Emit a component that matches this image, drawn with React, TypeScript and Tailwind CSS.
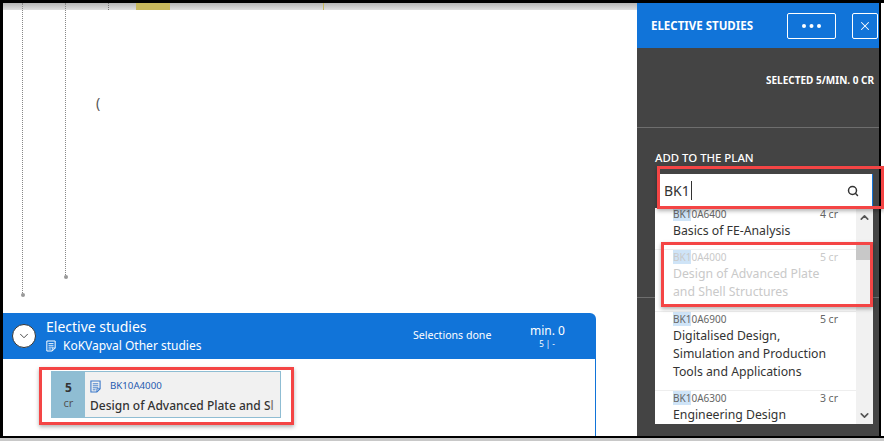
import { ChevronDown, ChevronUp, Search, X } from 'lucide-react';

const font = { fontFamily: '"Noto Sans", sans-serif' };

interface Option {
    code: string;
    credits: string;
    lines: string[];
    disabled?: boolean;
    height: string;
}

const options: Option[] = [
    { code: '0A6400', credits: '4 cr', lines: ['Basics of FE-Analysis'], height: 'h-[43px]' },
    { code: '0A4000', credits: '5 cr', lines: ['Design of Advanced Plate', 'and Shell Structures'], disabled: true, height: 'h-[62px]' },
    { code: '0A6900', credits: '5 cr', lines: ['Digitalised Design,', 'Simulation and Production', 'Tools and Applications'], height: 'h-[79px]' },
    { code: '0A6300', credits: '3 cr', lines: ['Engineering Design'], height: 'h-[40px]' },
];

// study module icon: sheet with text lines and a folded lower corner
function DocIcon({ className }: { className?: string }) {
    return (
        <svg viewBox="0 0 12 14" className={className} fill="none" stroke="currentColor">
            <path d="M1 1h10v8.5L7.5 13H1z" strokeWidth="1.2" />
            <path d="M3 4h6M3 6.2h6M3 8.4h6M3 10.6h3" strokeWidth="1" />
            <path d="M7.5 13V9.5H11" strokeWidth="1" />
        </svg>
    );
}

function OptionRow({ option }: { option: Option }) {
    return (
        <div className={`${option.height} shrink-0 overflow-hidden border-b border-[#eeeeee] px-[18px] ${option.disabled ? 'text-[#c9c9c9]' : 'text-[#333333]'}`}>
            <div className={`flex items-center justify-between text-[10px] leading-[14px] ${option.disabled ? 'text-[#c9c9c9]' : 'text-[#666666]'}`}>
                <span><span className="bg-[#cfe4f7]">BK1</span>{option.code}</span>
                <span className="text-[10.5px]">{option.credits}</span>
            </div>
            <div className="mt-[1px] text-[12.25px] leading-[18px]">
                {option.lines.map((line) => <div key={line} className="whitespace-nowrap">{line}</div>)}
            </div>
        </div>
    );
}

function Panel() {
    return (
        <div className="relative flex w-[242px] shrink-0 flex-col bg-[#444444] text-white">
            <div className="flex h-[45px] shrink-0 items-center bg-[#1174d9] pl-[14px]">
                <span className="w-[136px] whitespace-nowrap text-[11.5px] font-bold">ELECTIVE STUDIES</span>
                <button className="flex h-[26px] w-[49px] items-center justify-center rounded-[2px] border border-white">
                    <svg viewBox="0 0 19 4" className="h-[4px] w-[19px]" fill="currentColor">
                        <circle cx="2" cy="2" r="2" />
                        <circle cx="9.5" cy="2" r="2" />
                        <circle cx="17" cy="2" r="2" />
                    </svg>
                </button>
                <button className="ml-[16px] flex h-[26px] w-[26px] shrink-0 items-center justify-center rounded-[2px] border border-white">
                    <X size={14} strokeWidth={1.75} />
                </button>
            </div>
            <div className="flex h-[80px] shrink-0 items-center justify-end border-b border-[#6e6e6e] pb-[14px] pr-[5px]">
                <span className="text-[10px] font-bold">SELECTED 5/MIN. 0 CR</span>
            </div>
            <div className="ml-[18px] mt-[22px] text-[11.4px] font-medium leading-[15px]">ADD TO THE PLAN</div>
            <div className="ml-[22px] mr-[6px] mt-[9px] flex h-[33px] items-center justify-between border-r border-[#1174d9] bg-white pl-[5px] pr-[13px] text-[#333333]">
                <span className="text-[14px]">BK1<span className="ml-[1px] border-l border-[#333333]" /></span>
                <Search size={12} strokeWidth={3} />
            </div>
            <div className="mt-[90px] h-px bg-[#6e6e6e]" />

            <div className="absolute left-[18px] top-[205px] flex h-[216px] w-[218px] overflow-hidden bg-white">
                <div className="-mt-px flex w-[201px] flex-col">
                    {options.map((option) => <OptionRow key={option.code} option={option} />)}
                </div>
                <div className="relative w-[17px] bg-[#f1f1f1] text-[#555555]">
                    <ChevronUp size={13} strokeWidth={3} className="mx-auto mt-[3px]" />
                    <div className="mt-[21px] h-[15px] bg-[#c8c8c8]" />
                    <ChevronDown size={13} strokeWidth={3} className="absolute bottom-[2px] left-[2px]" />
                </div>
            </div>

            <div className="absolute left-[20px] top-[163px] h-[43px] w-[227px] border-[3px] border-[#f44545] shadow-[0_2px_4px_rgba(0,0,0,0.3)]" />
            <div className="absolute left-[24px] top-[239px] h-[65px] w-[212px] border-[3px] border-[#f44545] shadow-[0_2px_4px_rgba(0,0,0,0.3)]" />
        </div>
    );
}

function CourseCard() {
    return (
        <div className="relative ml-[48px] mt-[12px] flex h-[47px] w-[230px] border border-[#8fbdd3] bg-[#f1f1f1]">
            <div className="flex w-[33px] shrink-0 flex-col items-center justify-center bg-[#8fbdd3] text-[#333333]">
                <span className="text-[12px] font-bold leading-[15px]">5</span>
                <span className="text-[11px] leading-[15px] text-[#555555]">cr</span>
            </div>
            <div className="relative min-w-0 flex-1 pl-[5px]">
                <div className="mt-[6px] flex h-[16px] items-center gap-[9px] text-[#1f5bb0]">
                    <DocIcon className="h-[13px] w-[11px] text-[#3b78c9]" />
                    <span className="text-[9.7px]">BK10A4000</span>
                </div>
                <div className="mt-[3px] overflow-hidden whitespace-nowrap text-[12px] font-medium text-[#333333]">Design of Advanced Plate and Sl</div>
                <div className="absolute bottom-0 right-0 h-[22px] w-[12px] bg-gradient-to-r from-transparent to-[#f1f1f1]" />
            </div>
            <div className="absolute -bottom-[8px] -left-[13px] -right-[14px] -top-[5px] border-[3px] border-[#f44545] shadow-[0_2px_4px_rgba(0,0,0,0.3)]" />
        </div>
    );
}

function Main() {
    return (
        <div className="relative flex min-w-0 flex-1 flex-col bg-white">
            <div className="relative flex h-[7px] shrink-0 bg-gradient-to-b from-[#b5b5b5] to-[#e0e0e0]">
                <div className="ml-[133px] w-[34px] bg-[#c8b85c]" />
                <div className="ml-[153px] w-px bg-[#c8b85c]" />
            </div>

            <div className="absolute left-[19px] top-0 h-[292px] border-l border-dotted border-[#888888]" />
            <div className="absolute left-[17.5px] top-[290px] h-[4px] w-[4px] rounded-full bg-[#999999]" />
            <div className="absolute left-[62px] top-0 h-[274px] border-l border-dotted border-[#888888]" />
            <div className="absolute left-[60.5px] top-[272px] h-[4px] w-[4px] rounded-full bg-[#999999]" />
            <div className="absolute left-[105px] top-0 h-[7px] border-l border-dotted border-[#777777]" />
            <div className="absolute left-[93px] top-[90px] text-[14px] leading-[20px] text-[#555555]">(</div>

            <div className="flex-1" />

            <div className="mr-[41px] flex h-[123px] flex-col">
                <div className="flex h-[46px] shrink-0 items-center rounded-tr-[6px] bg-[#1174d9] text-white">
                    <div className="ml-[9px] flex h-[24px] w-[24px] items-center justify-center rounded-full border border-[#333333] bg-white text-[#333333]">
                        <ChevronDown size={14} strokeWidth={1.5} />
                    </div>
                    <div className="ml-[10px] w-[367px]">
                        <div className="text-[14px] leading-[20px]">Elective studies</div>
                        <div className="flex items-center gap-[7px] text-[12px] leading-[18px]">
                            <DocIcon className="h-[12px] w-[10px]" />
                            KoKVapval Other studies
                        </div>
                    </div>
                    <span className="w-[117px] whitespace-nowrap text-[10.6px]">Selections done</span>
                    <div className="w-[34px] text-center leading-none">
                        <div className="whitespace-nowrap text-[12px] leading-[16px]">min. 0</div>
                        <div className="text-[8px] leading-[10px]">5 | -</div>
                    </div>
                </div>
                <div className="min-h-0 flex-1 border-r border-[#1174d9]">
                    <CourseCard />
                </div>
            </div>
        </div>
    );
}

export default function App() {
    return (
        <div className="flex h-[441px] w-[884px] flex-col overflow-hidden bg-[#c8c8c8]" style={font}>
            <div className="flex h-[438px] w-[884px] shrink-0 border-b-2 border-l-[3px] border-t-[3px] border-black">
                <Main />
                <Panel />
                <div className="w-[5px] shrink-0 border-l-2 border-black bg-white" />
            </div>
        </div>
    );
}
